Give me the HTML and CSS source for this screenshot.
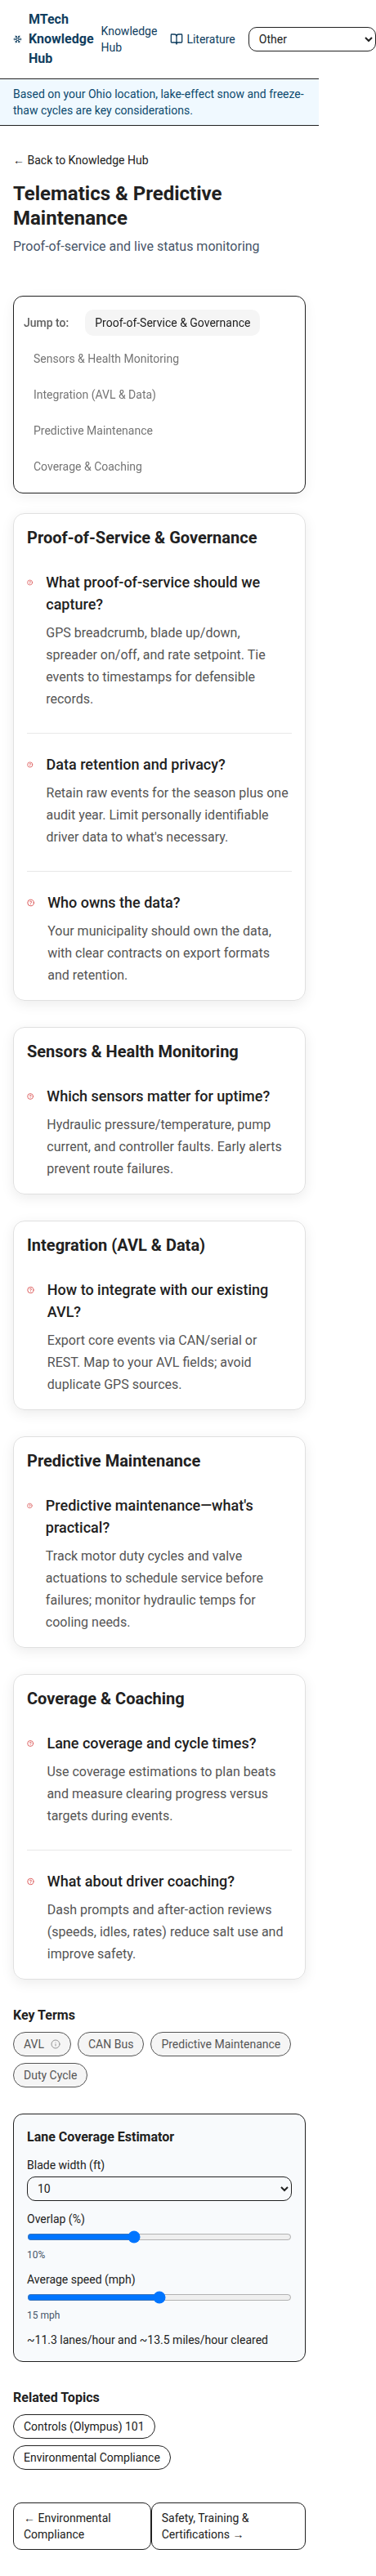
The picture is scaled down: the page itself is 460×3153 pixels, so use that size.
FILE: index.html
```html
<!DOCTYPE html>
<html lang="en">
<head>
<meta charset="utf-8">
<meta name="viewport" content="width=device-width, initial-scale=1">
<title>Telematics &amp; Predictive Maintenance</title>
<link rel="stylesheet" href="styles.css">
</head>
<body>
<svg class="sprite" aria-hidden="true">
  <symbol id="help" viewBox="0 0 24 24"><circle cx="12" cy="12" r="10"/><path d="M9.09 9a3 3 0 0 1 5.83 1c0 2-3 3-3 3"/><path d="M12 17h.01"/></symbol>
</svg>
<header class="header">
  <a class="brand" href="#">
    <svg class="brand-icon" viewBox="0 0 24 24" aria-hidden="true"><path d="m10 20-1.25-2.5L6 18M10 4 8.75 6.5 6 6M14 20l1.25-2.5L18 18M14 4l1.25 2.5L18 6M17 21l-3-6h-4M17 3l-3 6 1.5 3M2 12h6.5L10 9M20 10l-1.5 2 1.5 2M22 12h-6.5L14 15M4 10l1.5 2L4 14M7 21l3-6-1.5-3M7 3l3 6h4"/></svg>
    <span>MTech Knowledge Hub</span>
  </a>
  <nav class="nav">
    <a class="nav-link" href="#">Knowledge Hub</a>
    <a class="nav-link nav-lit" href="#">
      <svg class="book" viewBox="0 0 24 24" aria-hidden="true"><path d="M12 7v14M3 18a1 1 0 0 1-1-1V4a1 1 0 0 1 1-1h5a4 4 0 0 1 4 4 4 4 0 0 1 4-4h5a1 1 0 0 1 1 1v13a1 1 0 0 1-1 1h-6a3 3 0 0 0-3 3 3 3 0 0 0-3-3z"/></svg>
      Literature
    </a>
    <select class="select region" aria-label="Region"><option>Other</option></select>
  </nav>
</header>
<div class="notice">Based on your Ohio location, lake-effect snow and freeze-thaw cycles are key considerations.</div>
<main class="main">
  <a class="back" href="#">← Back to Knowledge Hub</a>
  <h1 class="title">Telematics &amp; Predictive Maintenance</h1>
  <p class="subtitle">Proof-of-service and live status monitoring</p>

  <nav class="jump" aria-label="Jump to">
    <span class="jump-label">Jump to:</span>
    <a class="jump-link active" href="#proof">Proof-of-Service &amp; Governance</a>
    <a class="jump-link" href="#sensors">Sensors &amp; Health Monitoring</a>
    <a class="jump-link" href="#integration">Integration (AVL &amp; Data)</a>
    <a class="jump-link" href="#predictive">Predictive Maintenance</a>
    <a class="jump-link" href="#coverage">Coverage &amp; Coaching</a>
  </nav>

  <div class="stack">
    <section class="card" id="proof">
      <h2 class="card-title">Proof-of-Service &amp; Governance</h2>
      <article class="qa"><svg class="help" aria-hidden="true"><use href="#help"/></svg>
        <div><h3 class="question">What proof-of-service should we capture?</h3>
        <p class="answer">GPS breadcrumb, blade up/down, spreader on/off, and rate setpoint. Tie events to timestamps for defensible records.</p></div></article>
      <article class="qa"><svg class="help" aria-hidden="true"><use href="#help"/></svg>
        <div><h3 class="question">Data retention and privacy?</h3>
        <p class="answer">Retain raw events for the season plus one audit year. Limit personally identifiable driver data to what's necessary.</p></div></article>
      <article class="qa"><svg class="help" aria-hidden="true"><use href="#help"/></svg>
        <div><h3 class="question">Who owns the data?</h3>
        <p class="answer">Your municipality should own the data, with clear contracts on export formats and retention.</p></div></article>
    </section>
    <section class="card" id="sensors">
      <h2 class="card-title">Sensors &amp; Health Monitoring</h2>
      <article class="qa"><svg class="help" aria-hidden="true"><use href="#help"/></svg>
        <div><h3 class="question">Which sensors matter for uptime?</h3>
        <p class="answer">Hydraulic pressure/temperature, pump current, and controller faults. Early alerts prevent route failures.</p></div></article>
    </section>
    <section class="card" id="integration">
      <h2 class="card-title">Integration (AVL &amp; Data)</h2>
      <article class="qa"><svg class="help" aria-hidden="true"><use href="#help"/></svg>
        <div><h3 class="question">How to integrate with our existing AVL?</h3>
        <p class="answer">Export core events via CAN/serial or REST. Map to your AVL fields; avoid duplicate GPS sources.</p></div></article>
    </section>
    <section class="card" id="predictive">
      <h2 class="card-title">Predictive Maintenance</h2>
      <article class="qa"><svg class="help" aria-hidden="true"><use href="#help"/></svg>
        <div><h3 class="question">Predictive maintenance—what's practical?</h3>
        <p class="answer">Track motor duty cycles and valve actuations to schedule service before failures; monitor hydraulic temps for cooling needs.</p></div></article>
    </section>
    <section class="card" id="coverage">
      <h2 class="card-title">Coverage &amp; Coaching</h2>
      <article class="qa"><svg class="help" aria-hidden="true"><use href="#help"/></svg>
        <div><h3 class="question">Lane coverage and cycle times?</h3>
        <p class="answer">Use coverage estimations to plan beats and measure clearing progress versus targets during events.</p></div></article>
      <article class="qa"><svg class="help" aria-hidden="true"><use href="#help"/></svg>
        <div><h3 class="question">What about driver coaching?</h3>
        <p class="answer">Dash prompts and after-action reviews (speeds, idles, rates) reduce salt use and improve safety.</p></div></article>
    </section>

    <section>
      <h2 class="heading">Key Terms</h2>
      <div class="chips">
        <button class="chip term" type="button">AVL <svg class="info" viewBox="0 0 24 24" aria-hidden="true"><circle cx="12" cy="12" r="10"/><path d="M12 16v-4M12 8h.01"/></svg></button>
        <button class="chip term" type="button">CAN Bus</button>
        <button class="chip term" type="button">Predictive Maintenance</button>
        <button class="chip term" type="button">Duty Cycle</button>
      </div>
    </section>

    <section class="estimator">
      <h2 class="heading">Lane Coverage Estimator</h2>
      <div class="field">
        <label for="blade">Blade width (ft)</label>
        <select class="select" id="blade"><option>10</option></select>
      </div>
      <div class="field">
        <label for="overlap">Overlap (%)</label>
        <input class="range" id="overlap" type="range" min="0" max="25" value="10">
        <output class="value" for="overlap">10%</output>
      </div>
      <div class="field">
        <label for="speed">Average speed (mph)</label>
        <input class="range" id="speed" type="range" min="5" max="25" value="15">
        <output class="value" for="speed">15 mph</output>
      </div>
      <p class="result">~11.3 lanes/hour and ~13.5 miles/hour cleared</p>
    </section>

    <section>
      <h2 class="heading">Related Topics</h2>
      <div class="chips">
        <a class="chip" href="#">Controls (Olympus) 101</a>
        <a class="chip" href="#">Environmental Compliance</a>
      </div>
    </section>
  </div>

  <nav class="pager" aria-label="Pages">
    <a class="page-link" href="#">← Environmental Compliance</a>
    <a class="page-link" href="#">Safety, Training &amp; Certifications →</a>
  </nav>
</main>
</body>
</html>
```
FILE: styles.css
```css
* { box-sizing: border-box; }

body {
  margin: 0;
  background: #fff;
  color: #212121;
  font-family: Roboto, "Liberation Sans", sans-serif;
  font-size: 14px;
  line-height: 20px;
}

h1, h2, h3, p { margin: 0; }
a { color: inherit; text-decoration: none; }

svg {
  fill: none;
  stroke: currentColor;
  stroke-width: 2;
  stroke-linecap: round;
  stroke-linejoin: round;
}

.sprite { display: none; }

.header, .notice, .main { max-width: 390px; }

.header {
  display: flex;
  align-items: center;
  gap: 9px;
  padding: 12px 16px;
  border-bottom: 1px solid #212121;
  color: #0f3d5e;
}

.brand {
  display: flex;
  align-items: center;
  gap: 8px;
  font-size: 16px;
  font-weight: 700;
  line-height: 24px;
}
.brand-icon { flex: none; width: 11px; height: 20px; }

.nav { display: flex; align-items: center; gap: 16px; }
.nav-lit { display: flex; align-items: center; gap: 4px; }
.book { flex: none; width: 16px; height: 16px; }

.select {
  padding: 5px 8px;
  border: 1px solid #212121;
  border-radius: 10px;
  background: transparent;
  color: #212121;
  font: inherit;
  line-height: normal;
}
.region { flex: none; width: 156px; }

.notice {
  padding: 8px 16px;
  border-bottom: 1px solid #212121;
  background: #f0f9ff;
  color: #0c4a6e;
}

.main { padding: 32px 16px; }
.back { display: block; }
.title { margin-top: 16px; font-size: 24px; line-height: 30px; }
.subtitle { margin-top: 8px; color: #475569; font-size: 16px; line-height: 24px; }

.jump {
  display: flex;
  flex-wrap: wrap;
  align-items: center;
  gap: 12px;
  margin-top: 48px;
  padding: 16px 12px;
  border: 1px solid #212121;
  border-radius: 12px;
  box-shadow: 0 4px 16px rgba(0, 0, 0, 0.06);
  backdrop-filter: blur(8px);
}
.jump-label { margin-right: 8px; color: #616161; font-weight: 500; }
.jump-link { padding: 6px 12px; border-radius: 10px; color: #757575; }
.active { background: #f5f5f5; color: #212121; }

.stack { display: grid; gap: 32px; margin-top: 24px; }

.card {
  padding: 16px;
  border: 1px solid #e0e0e0;
  border-radius: 14px;
  box-shadow: 0 4px 16px rgba(0, 0, 0, 0.08);
}
.card-title { margin-bottom: 28px; font-size: 20px; line-height: 26px; }

.qa { display: flex; gap: 16px; padding-bottom: 1px; }
.qa + .qa { margin-top: 27px; padding-top: 24px; border-top: 1px solid #e8e8e8; }
.help { width: 20px; height: 20px; margin-top: 4px; color: #d32f2f; }
.question { font-size: 18px; font-weight: 500; line-height: 27px; }
.answer { margin-top: 8px; color: #555; font-size: 16px; line-height: 27px; }

.heading { margin-bottom: 8px; font-size: 16px; line-height: 24px; }

.chips { display: flex; flex-wrap: wrap; gap: 8px; }
.chip {
  display: inline-flex;
  align-items: center;
  gap: 8px;
  padding: 4px 12px;
  border: 1px solid #212121;
  border-radius: 15px;
  background: #fff;
  font: inherit;
}
.term { border-color: #555; background: #f5f5f5; color: #555; }
.info { width: 12px; height: 12px; opacity: 0.6; }

.estimator {
  display: grid;
  gap: 12px;
  padding: 16px;
  border: 1px solid #212121;
  border-radius: 12px;
  background: #f8fafc;
}
.estimator .heading { margin: 0; }
.field { display: grid; gap: 4px; }
.range { width: 100%; height: 16px; margin: 0; }
.value { margin-top: 2px; color: #475569; font-size: 12px; line-height: 16px; }

.pager { display: flex; justify-content: space-between; margin-top: 40px; }
.page-link { padding: 8px 12px; border: 1px solid #212121; border-radius: 10px; }
```
